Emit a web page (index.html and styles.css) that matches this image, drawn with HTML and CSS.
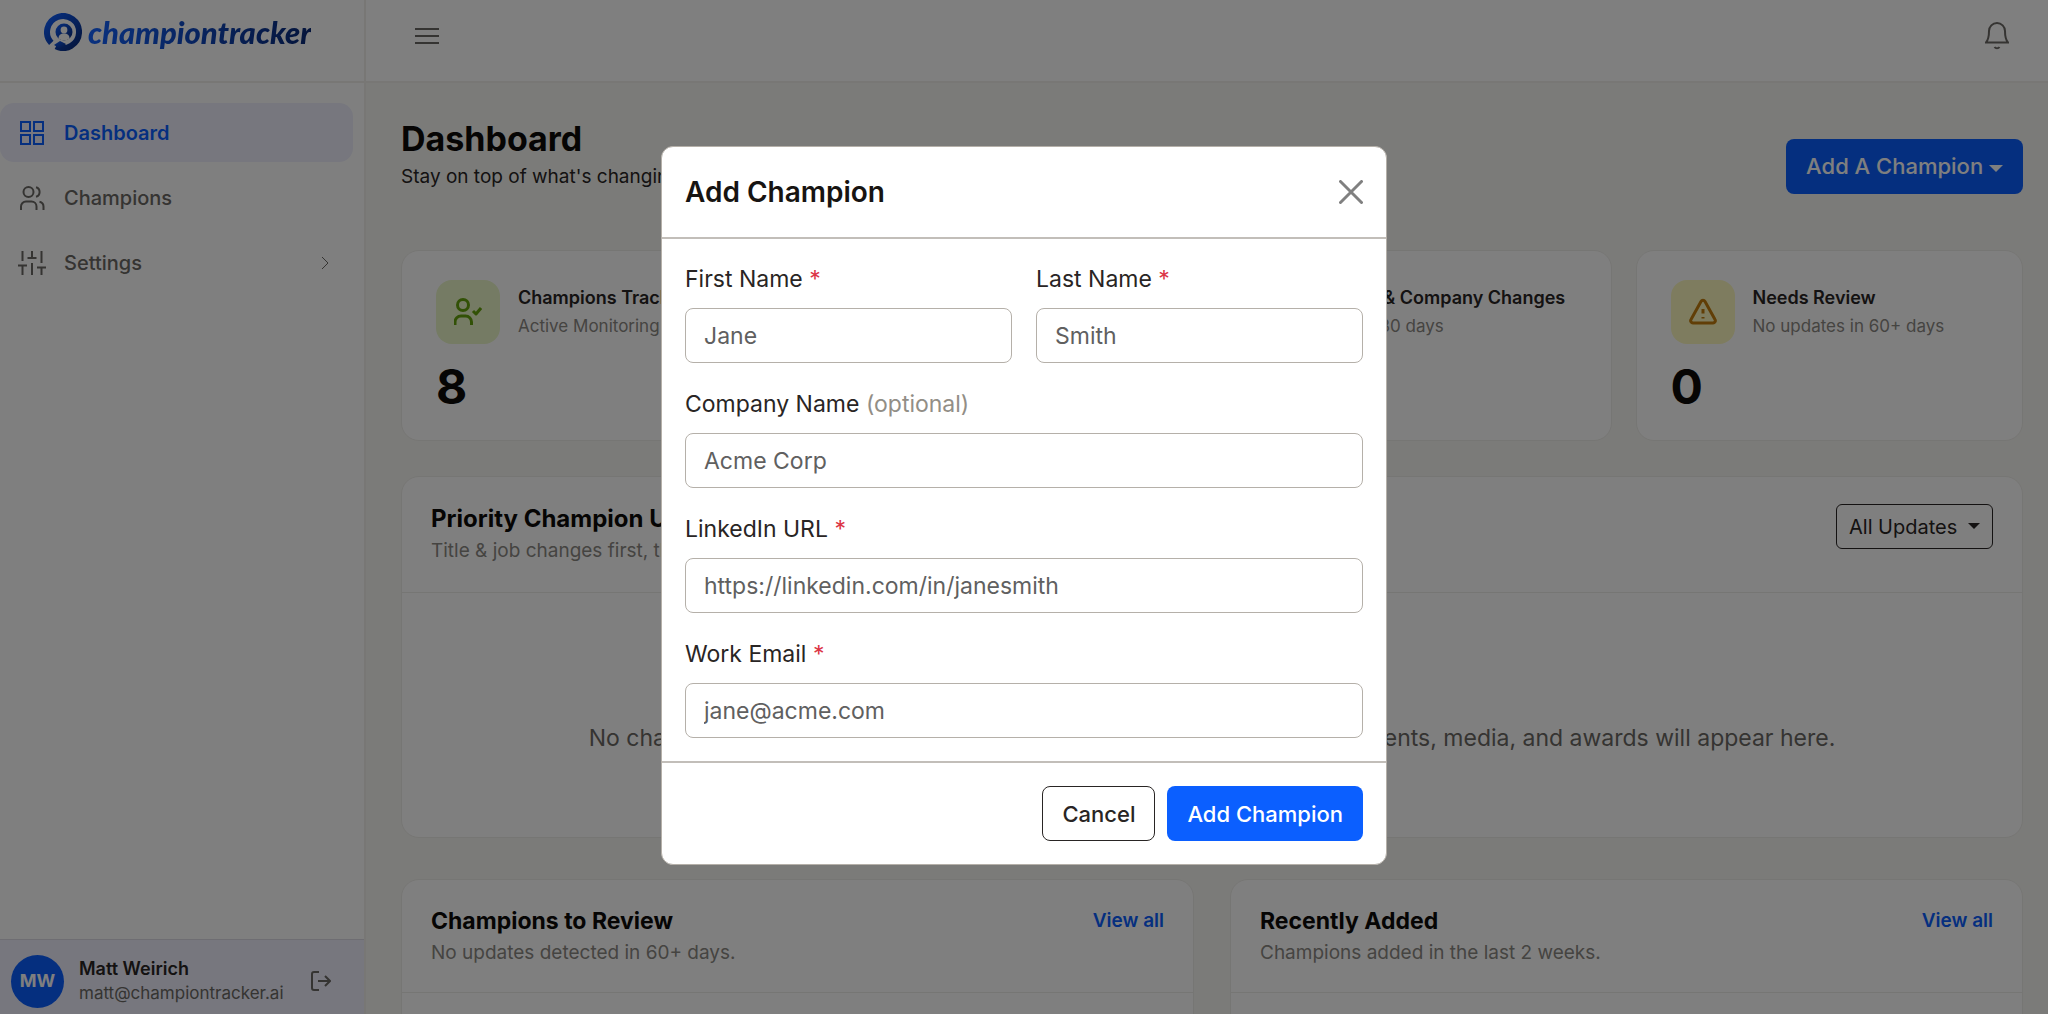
FILE: index.html
```html
<!DOCTYPE html>
<html lang="en">
<head>
    <meta charset="UTF-8">
    <meta name="viewport" content="width=device-width, initial-scale=1.0">
    <title>Dashboard - Champion Tracker</title>
    <link rel="stylesheet" href="styles.css">
</head>
<body>
    <div class="layout">
        <!-- Sidebar -->
        <aside class="sidebar">
            <a class="logo" href="#">
                <svg class="logo-mark" viewBox="0 0 38 38" aria-hidden="true">
                    <defs>
                        <linearGradient id="logoGradient" x1="0" y1="0" x2="1" y2="1">
                            <stop offset="0" stop-color="#0f5fff"/>
                            <stop offset="1" stop-color="#0a2a78"/>
                        </linearGradient>
                    </defs>
                    <path fill="none" stroke="url(#logoGradient)" stroke-width="6" d="M7.300 29.900A16 16 0 1 1 12 33.400"/>
                    <path fill="url(#logoGradient)" d="M10 32l6-4 6 3-5 5z"/>
                    <circle cx="20" cy="19" r="8.500" fill="url(#logoGradient)"/>
                    <circle cx="20" cy="17" r="3.400" fill="#fff"/>
                    <path fill="#fff" d="M14.500 25.500c0-3.500 2-5 5.500-5s5.500 1.500 5.500 5c-3 2.500-8 2.500-11 0z"/>
                </svg>
                <span class="logo-text">championtracker</span>
            </a>

            <nav class="nav">
                <a class="nav-link active" href="#">
                    <svg class="nav-icon" viewBox="0 0 24 24"><path d="M1 1h9v9H1zM14 1h9v9h-9zM1 14h9v9H1zM14 14h9v9h-9z"/></svg>
                    <span>Dashboard</span>
                </a>
                <a class="nav-link" href="#">
                    <svg class="nav-icon" viewBox="0 0 24 24"><circle cx="8.500" cy="6" r="5"/><path d="M1 24v-3.500a5 5 0 0 1 5-5h5.500a5 5 0 0 1 5 5V24M16 1.200a5 5 0 0 1 0 9.600M23.500 24v-3.500a5 5 0 0 0-4-4.800"/></svg>
                    <span>Champions</span>
                </a>
                <a class="nav-link" href="#">
                    <svg class="nav-icon nav-icon-wide" viewBox="0 0 28 24"><path d="M4.500 24v-9M4.500 10V0M14 24V12M14 7V0M23.500 24v-7M23.500 12V0M0 14.500h9M9.500 7h9M19 16.500h9"/></svg>
                    <span>Settings</span>
                    <svg class="nav-chevron" viewBox="0 0 8 14"><path d="M1 1l6 6-6 6"/></svg>
                </a>
            </nav>

            <div class="user">
                <span class="avatar">MW</span>
                <div class="user-info">
                    <div class="user-name">Matt Weirich</div>
                    <div class="user-email">matt@championtracker.ai</div>
                </div>
                <button class="icon-btn" type="button" aria-label="Log out">
                    <svg class="logout-icon" viewBox="0 0 20 20"><path d="M8 1H3a2 2 0 0 0-2 2v14a2 2 0 0 0 2 2h5M7 10h12M14 5l5 5-5 5"/></svg>
                </button>
            </div>
        </aside>

        <div class="page">
            <!-- Top bar -->
            <header class="topbar">
                <button class="icon-btn" type="button" aria-label="Toggle menu">
                    <svg class="menu-icon" viewBox="0 0 24 18"><path d="M0 2h24M0 9h24M0 16h24"/></svg>
                </button>
                <button class="icon-btn" type="button" aria-label="Notifications">
                    <svg class="bell-icon" viewBox="0 0 24 28"><path d="M1 20.500c3-3.500 3-7 3-11.500a8 8 0 0 1 16 0c0 4.500 0 8 3 11.500zM9.500 25a3 3 0 0 0 5 0"/></svg>
                </button>
            </header>

            <main class="content">
                <div class="page-head">
                    <div>
                        <h1>Dashboard</h1>
                        <p class="lead">Stay on top of what's changing with your champions.</p>
                    </div>
                    <button class="btn btn-primary" type="button">Add A Champion <span class="caret"></span></button>
                </div>

                <section class="stats">
                    <div class="card stat">
                        <div class="stat-head">
                            <span class="stat-icon green">
                                <svg viewBox="0 0 28 28"><circle cx="9" cy="7" r="5.500"/><path d="M1 27v-3a6 6 0 0 1 6-6h4.500a6 6 0 0 1 6 6v3M19 13l3 3 5-6"/></svg>
                            </span>
                            <div>
                                <h2>Champions Tracked</h2>
                                <p>Active Monitoring</p>
                            </div>
                        </div>
                        <div class="stat-value">8</div>
                    </div>
                    <div class="card stat">
                        <div class="stat-head">
                            <span class="stat-icon green">
                                <svg viewBox="0 0 28 28"><path d="M3 24V14M14 24V4M25 24V10"/></svg>
                            </span>
                            <div>
                                <h2>New Updates</h2>
                                <p>Last 30 days</p>
                            </div>
                        </div>
                        <div class="stat-value">0</div>
                    </div>
                    <div class="card stat">
                        <div class="stat-head">
                            <span class="stat-icon green">
                                <svg viewBox="0 0 28 28"><path d="M3 9h22v15H3zM10 9V4h8v5"/></svg>
                            </span>
                            <div>
                                <h2>Role &amp; Company Changes</h2>
                                <p>Last 30 days</p>
                            </div>
                        </div>
                        <div class="stat-value">0</div>
                    </div>
                    <div class="card stat">
                        <div class="stat-head">
                            <span class="stat-icon yellow">
                                <svg viewBox="0 0 28 28"><path d="M12 3.500a2.300 2.300 0 0 1 4 0l10 18a2.300 2.300 0 0 1-2 3.500H4a2.300 2.300 0 0 1-2-3.500zM14 11v4.500M14 19v1.500"/></svg>
                            </span>
                            <div>
                                <h2>Needs Review</h2>
                                <p>No updates in 60+ days</p>
                            </div>
                        </div>
                        <div class="stat-value">0</div>
                    </div>
                </section>

                <section class="card">
                    <div class="card-head">
                        <div>
                            <h2 class="card-title">Priority Champion Updates</h2>
                            <p class="card-sub">Title &amp; job changes first, then everything else.</p>
                        </div>
                        <div class="filter">
                            <select aria-label="Filter updates">
                                <option>All Updates</option>
                            </select>
                        </div>
                    </div>
                    <div class="empty">No champion updates to show today. New roles, promotions, announcements, media, and awards will appear here.</div>
                </section>

                <section class="columns">
                    <div class="card">
                        <div class="card-head">
                            <div>
                                <h2 class="card-title">Champions to Review</h2>
                                <p class="card-sub">No updates detected in 60+ days.</p>
                            </div>
                            <a class="view-all" href="#">View all</a>
                        </div>
                        <div class="empty"></div>
                    </div>
                    <div class="card">
                        <div class="card-head">
                            <div>
                                <h2 class="card-title">Recently Added</h2>
                                <p class="card-sub">Champions added in the last 2 weeks.</p>
                            </div>
                            <a class="view-all" href="#">View all</a>
                        </div>
                        <div class="empty"></div>
                    </div>
                </section>
            </main>
        </div>
    </div>

    <!-- Add champion modal -->
    <div class="backdrop">
        <form class="modal" role="dialog" aria-labelledby="modalTitle">
            <div class="modal-header">
                <h2 id="modalTitle">Add Champion</h2>
                <button class="icon-btn close" type="button" aria-label="Close">
                    <svg class="close-icon" viewBox="0 0 24 24"><path d="M1.500 1.500l21 21M22.500 1.500l-21 21"/></svg>
                </button>
            </div>
            <div class="modal-body">
                <div class="form-row">
                    <div class="field">
                        <label for="firstName">First Name <span class="required">*</span></label>
                        <input type="text" id="firstName" placeholder="Jane">
                    </div>
                    <div class="field">
                        <label for="lastName">Last Name <span class="required">*</span></label>
                        <input type="text" id="lastName" placeholder="Smith">
                    </div>
                </div>
                <div class="field">
                    <label for="company">Company Name <span class="optional">(optional)</span></label>
                    <input type="text" id="company" placeholder="Acme Corp">
                </div>
                <div class="field">
                    <label for="linkedin">LinkedIn URL <span class="required">*</span></label>
                    <input type="url" id="linkedin" placeholder="https://linkedin.com/in/janesmith">
                </div>
                <div class="field">
                    <label for="email">Work Email <span class="required">*</span></label>
                    <input type="email" id="email" placeholder="jane@acme.com">
                </div>
            </div>
            <div class="modal-footer">
                <button class="btn btn-outline" type="button">Cancel</button>
                <button class="btn btn-primary" type="submit">Add Champion</button>
            </div>
        </form>
    </div>
</body>
</html>
```
FILE: styles.css
```css
* {
    box-sizing: border-box;
}

body {
    margin: 0;
    height: 100vh;
    overflow: hidden;
    font-family: Inter, "Liberation Sans", Arial, sans-serif;
    font-size: 22px;
    line-height: 34px;
    color: #292524;
    background-color: #f7f7f3;
}

h1, h2, p {
    margin: 0;
}

a {
    text-decoration: none;
}

svg {
    display: block;
    flex: none;
    fill: none;
    stroke: currentColor;
    stroke-width: 2;
}

button, input, select {
    font: inherit;
}

.layout {
    display: flex;
    height: 100vh;
}

/* Sidebar */
.sidebar {
    display: flex;
    flex-direction: column;
    flex: none;
    width: 366px;
    background-color: #fff;
    border-right: 2px solid #f0efeb;
}

.logo {
    display: flex;
    align-items: center;
    gap: 6px;
    height: 83px;
    padding: 0 44px 18px;
    border-bottom: 2px solid #f0efeb;
}

.logo-mark {
    width: 38px;
    height: 38px;
    stroke: none;
}

.logo-text {
    font-family: Lato, sans-serif;
    font-size: 31px;
    font-style: italic;
    font-weight: 900;
    line-height: 40px;
    background: linear-gradient(to right, #1463ff, #0a2a78);
    background-clip: text;
    -webkit-background-clip: text;
    color: transparent;
}

.nav {
    display: flex;
    flex-direction: column;
    flex: 1;
    gap: 6px;
    padding: 20px 11px 0 0;
}

.nav-link {
    display: flex;
    align-items: center;
    gap: 20px;
    height: 59px;
    padding: 0 24px 0 20px;
    border-radius: 14px;
    font-size: 20px;
    font-weight: 500;
    color: #6b6864;
}

.nav-link.active {
    background-color: #eeeffc;
    color: #0b5fff;
    font-weight: 600;
}

.nav-icon {
    width: 24px;
    height: 24px;
    overflow: visible;
}

.nav-icon-wide {
    width: 28px;
    margin: 0 -2px;
}

.nav-chevron {
    width: 8px;
    height: 14px;
    margin-left: auto;
    stroke-width: 1;
}

.user {
    display: flex;
    align-items: center;
    gap: 15px;
    height: 75px;
    padding: 8px 33px 0 11px;
    background-color: #eeeffc;
    border-top: 1px solid #dcdbe4;
}

.avatar {
    display: flex;
    align-items: center;
    justify-content: center;
    flex: none;
    width: 53px;
    height: 53px;
    border-radius: 50%;
    background-color: #0b5fff;
    color: #fff;
    font-size: 18px;
    font-weight: 700;
}

.user-info {
    flex: 1;
    line-height: 25px;
}

.user-name {
    font-size: 18px;
    font-weight: 600;
}

.user-email {
    font-size: 17px;
    color: #6b6864;
}

.logout-icon {
    width: 20px;
    height: 20px;
}

.icon-btn {
    padding: 0;
    border: none;
    background: none;
    color: #6b6864;
    cursor: pointer;
}

/* Page */
.page {
    flex: 1;
    min-width: 0;
    overflow: hidden;
}

.topbar {
    display: flex;
    align-items: center;
    justify-content: space-between;
    height: 83px;
    padding: 0 39px 10px 49px;
    background-color: #fff;
    border-bottom: 2px solid #f0efeb;
}

.menu-icon {
    width: 24px;
    height: 18px;
}

.bell-icon {
    width: 24px;
    height: 28px;
}

.content {
    display: flex;
    flex-direction: column;
    gap: 35px;
    padding: 34px 25px 0 35px;
}

.page-head {
    display: flex;
    align-items: center;
    justify-content: space-between;
    height: 98px;
}

.page-head > div {
    align-self: flex-start;
}

h1 {
    font-size: 34px;
    line-height: 44px;
    font-weight: 700;
    color: #0c0a09;
}

.lead {
    font-size: 19px;
    line-height: 32px;
}

.card {
    background-color: #fff;
    border: 1px solid #edece8;
    border-radius: 18px;
}

.stats {
    display: grid;
    grid-template-columns: repeat(4, 1fr);
    gap: 24px;
}

.stat {
    height: 191px;
    padding: 29px 34px 0;
}

.stat-head {
    display: flex;
    align-items: center;
    gap: 18px;
    line-height: 28px;
    white-space: nowrap;
}

.stat-head h2 {
    font-size: 18px;
    font-weight: 600;
}

.stat-head p {
    font-size: 17px;
    color: #8b8883;
}

.stat-icon {
    display: flex;
    align-items: center;
    justify-content: center;
    flex: none;
    width: 64px;
    height: 64px;
    border-radius: 16px;
}

.stat-icon svg {
    width: 28px;
    height: 28px;
    stroke-width: 3;
    stroke-linejoin: round;
}

.green {
    background-color: #eaf6c8;
    color: #65a30d;
}

.yellow {
    background-color: #fcf9be;
    color: #c27c0c;
}

.stat-value {
    margin-top: 13px;
    font-size: 48px;
    line-height: 60px;
    font-weight: 700;
    color: #0c0a09;
}

.card-head {
    display: flex;
    align-items: flex-start;
    justify-content: space-between;
    height: 116px;
    padding: 25px 29px 0;
    border-bottom: 1px solid #edece8;
}

.card-title {
    font-size: 24px;
    line-height: 34px;
    font-weight: 700;
    color: #0c0a09;
}

.card-sub {
    font-size: 19px;
    line-height: 30px;
    color: #8b8883;
}

.filter {
    position: relative;
    margin-top: 2px;
}

.filter select {
    appearance: none;
    height: 45px;
    padding: 0 34px 0 12px;
    border: 1px solid #292524;
    border-radius: 6px;
    background-color: #fff;
    color: #292524;
    font-size: 20px;
}

/* dropdown arrow drawn over the select */
.filter::after {
    content: "";
    position: absolute;
    top: 19px;
    right: 13px;
    border: 6px solid transparent;
    border-top-color: #292524;
    border-bottom: 0;
    pointer-events: none;
}

.empty {
    display: flex;
    align-items: center;
    justify-content: center;
    height: 244px;
    padding-top: 46px;
    font-size: 23px;
    color: #6b6864;
}

.columns {
    display: grid;
    grid-template-columns: 1fr 1fr;
    gap: 36px;
    padding-top: 6px;
}

.columns .card-head {
    height: 113px;
    padding-top: 24px;
}

.columns .card-title {
    font-size: 23px;
}

.view-all {
    font-size: 19px;
    line-height: 34px;
    font-weight: 600;
    color: #0b5fff;
}

/* Buttons */
.btn {
    height: 55px;
    padding: 0 19px;
    border: 1px solid transparent;
    border-radius: 8px;
    font-weight: 500;
    white-space: nowrap;
    cursor: pointer;
}

.btn-primary {
    background-color: #0b5fff;
    color: #fff;
}

.btn-outline {
    background-color: #fff;
    border-color: #292524;
    color: #292524;
}

.caret {
    display: inline-block;
    vertical-align: middle;
    border: 7px solid transparent;
    border-top-color: currentColor;
    border-bottom: 0;
}

/* Modal */
.backdrop {
    position: fixed;
    inset: 0;
    display: flex;
    align-items: center;
    justify-content: center;
    padding-bottom: 3px;
    background-color: rgba(0, 0, 0, 0.5);
}

.modal {
    width: 100%;
    max-width: 726px;
    background-color: #fff;
    border: 1px solid #b5b0a9;
    border-radius: 12px;
}

.modal-header {
    display: flex;
    align-items: center;
    justify-content: space-between;
    height: 92px;
    padding: 0 23px;
    border-bottom: 2px solid #c2beb9;
}

.modal-header h2 {
    font-size: 28px;
    font-weight: 600;
    color: #171412;
}

.close-icon {
    width: 24px;
    height: 24px;
    stroke-width: 3;
    stroke-linecap: round;
    color: #808080;
}

.modal-body {
    display: flex;
    flex-direction: column;
    gap: 24px;
    padding: 23px;
    font-size: 23px;
}

.form-row {
    display: grid;
    grid-template-columns: 1fr 1fr;
    gap: 24px;
}

.field label {
    display: block;
    margin-bottom: 12px;
}

.field input {
    display: block;
    width: 100%;
    height: 55px;
    padding: 0 18px;
    border: 1px solid #b5b0a9;
    border-radius: 8px;
    background-color: #fff;
    color: #292524;
}

.field input::placeholder {
    color: #606060;
}

.required {
    color: #dc3545;
}

.optional {
    color: #928e86;
}

.modal-footer {
    display: flex;
    justify-content: flex-end;
    gap: 12px;
    padding: 23px;
    border-top: 2px solid #c2beb9;
}
```
